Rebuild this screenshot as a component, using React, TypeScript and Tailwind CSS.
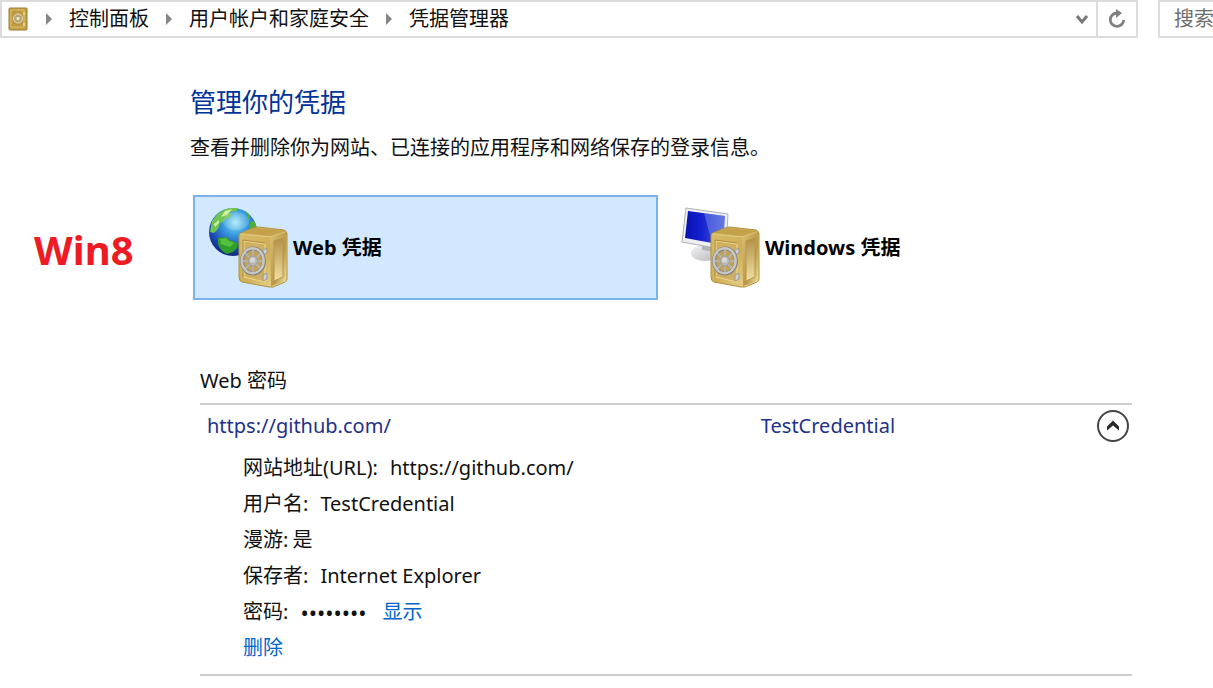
import React, { useState } from "react";

function Safe() {
  return (
    <g>
      <path d="M32 26 Q30 26 30 29 L30 70 Q30 74 33 75 L60 80 L64 80 L76 75 Q78 74 78 72 L78 27 Q78 24 75 23 L49 20 Q46 20 44 21Z" fill="url(#front)" stroke="#b0903f" strokeWidth="1" />
      <path d="M32 26 L46 21 L76 24 L61 29Z" fill="#c2a14a" />
      <path d="M31 27 L61 30 L77 25" fill="none" stroke="#e2ca7e" strokeWidth="1" />
      <path d="M61 30 L77 25 L77 74 L62 79Z" fill="url(#side)" />
      <path d="M65 34 L74 31 L74 70 L65 74Z" fill="url(#inset)" stroke="#b8964a" strokeWidth="1" />
      <path d="M35 34 L56 37 L56 75 L35 70Z" fill="#d0b060" stroke="#ecd892" strokeWidth="1" />
      <path d="M34 70 V33 L56 36" fill="none" stroke="#b09044" strokeWidth="1" />
      <path d="M54 43 l4 -2 v5 l-4 2z M54 68 l4 -2 v6 l-4 2z" fill="#cfcfcd" stroke="#9a9894" strokeWidth="1" />
      <ellipse cx="44" cy="54" rx="11" ry="12.5" fill="#c2a35a" stroke="#85827d" strokeWidth="4" />
      <path d="M44 42V66 M33 54H55 M36 46L52 62 M52 46L36 62" stroke="#b3b2af" strokeWidth="1.8" />
      <ellipse cx="43.7" cy="53.7" rx="11" ry="12.5" fill="none" stroke="#c6c6c6" strokeWidth="2.4" />
      <ellipse cx="44" cy="54" rx="4.5" ry="5" fill="#b9b9b9" stroke="#a09f9d" />
      <ellipse cx="43.5" cy="53" rx="2.5" ry="2.5" fill="#d8d8d8" />
    </g>
  );
}

function Gradients() {
  return (
    <svg width="0" height="0" className="absolute" aria-hidden="true">
      <defs>
        <linearGradient id="front" x1="0" y1="0" x2="1" y2="1"><stop offset="0" stopColor="#d9bd68" /><stop offset=".5" stopColor="#cfae56" /><stop offset="1" stopColor="#f2e29c" /></linearGradient>
        <linearGradient id="side" x1="0" y1="0" x2="1" y2="1"><stop offset="0" stopColor="#dcc173" /><stop offset=".6" stopColor="#b9974a" /><stop offset="1" stopColor="#f4e6a2" /></linearGradient>
        <linearGradient id="inset" x1="0" y1="0" x2="0" y2="1"><stop offset="0" stopColor="#b3914a" /><stop offset="1" stopColor="#f0e0a0" /></linearGradient>
        <radialGradient id="ocean" cx=".55" cy=".3" r=".7"><stop offset="0" stopColor="#a8e8fb" /><stop offset=".35" stopColor="#3a9fe0" /><stop offset=".75" stopColor="#1d4cb8" /><stop offset="1" stopColor="#12277c" /></radialGradient>
        <linearGradient id="screen" x1="0" y1="0" x2="1" y2="0"><stop offset="0" stopColor="#0912b0" /><stop offset=".4" stopColor="#1420cf" /><stop offset="1" stopColor="#4a60da" /></linearGradient>
        <linearGradient id="stand" x1="0" y1="0" x2="1" y2="1"><stop offset="0" stopColor="#f5f5f6" /><stop offset="1" stopColor="#b5b6ba" /></linearGradient>
      </defs>
    </svg>
  );
}

function WebIcon() {
  return (
    <svg width="80" height="82" viewBox="0 0 80 82" aria-hidden="true" className="shrink-0">
      <circle cx="24" cy="25" r="24" fill="url(#ocean)" />
      <path d="M3 14 Q9 4 20 1 L28 1 L28 4 L21 5 L22 9 L20 12 L17 11 L14 15 L11 16 L9 22 L5 26 L1 25Z" fill="#6fc552" />
      <path d="M16 4 L23 2 L18 8 L12 10Z M5 17 L10 13 L10 16 L6 20Z" fill="#d5eda1" />
      <path d="M35 3 L40 7 L41 13 L38 12 L39 9Z M41 15 L45 14 L48 20 L47 23 L41 22Z" fill="#4fae3a" />
      <path d="M9 31 L17 30 L21 33 L29 36 L28 41 L24 45 L18 47 Q11 44 9 37Z" fill="#2f9f2b" />
      <path d="M11 32 L17 31 L20 34 L25 36 L21 40 L12 37Z" fill="#55bf42" />
      <ellipse cx="27" cy="14" rx="13" ry="9" fill="#fff" opacity=".15" />
      <Safe />
    </svg>
  );
}

function WindowsIcon() {
  return (
    <svg width="80" height="82" viewBox="0 0 80 82" aria-hidden="true" className="shrink-0">
      <ellipse cx="24" cy="46" rx="14" ry="8" fill="url(#stand)" />
      <path d="M21 36 L35 38 L34 45 L21 43Z" fill="#b3b4b8" />
      <path d="M5 1 L47 7 L45 43 L1 35Z" fill="#eeeff1" stroke="#aeb0b6" strokeWidth="1" />
      <path d="M7 4 L44 9 L42 38 L4 31Z" fill="url(#screen)" />
      <path d="M23 6 L44 9 L42 38 L31 36Z" fill="#8ea0ed" opacity=".4" />
      <Safe />
    </svg>
  );
}

function SafeSmall() {
  return (
    <svg width="20" height="24" viewBox="0 0 20 24" aria-hidden="true">
      <rect x="1" y="1" width="18" height="22" rx="1" fill="#c6a347" stroke="#9a7a32" />
      <path d="M3 3H16V20H3Z" fill="#bd9840" stroke="#dcc06a" />
      <circle cx="10" cy="11.5" r="4.5" fill="#b5a678" stroke="#e6dcb8" />
      <circle cx="10" cy="11.5" r="1.5" fill="#f2eedd" />
      <path d="M16 5v3M16 16v3" stroke="#fff1ba" />
    </svg>
  );
}

function Crumb({ children }: { children: React.ReactNode }) {
  return (
    <li className="flex items-center">
      <svg width="8" height="14" viewBox="0 0 8 14" aria-hidden="true"><path d="M1 1L7 7L1 13Z" fill="#858585" /></svg>
      <a href="#crumb" className="mx-4">{children}</a>
    </li>
  );
}

function Card({ active, icon, label, onClick }: { active: boolean; icon: React.ReactNode; label: string; onClick: () => void }) {
  return (
    <button
      type="button"
      aria-pressed={active}
      onClick={onClick}
      className={`flex h-[105px] flex-1 items-center gap-1 border-2 pl-[14px] text-left font-bold text-black ${active ? "border-[#79b2ec] bg-[#d1e8ff]" : "border-transparent"}`}
    >
      {icon}
      <span className="whitespace-nowrap">{label}</span>
    </button>
  );
}

function Row({ name, children }: { name: string; children: React.ReactNode }) {
  return (
    <div className="flex h-9 items-center gap-3 whitespace-nowrap">
      <dt>{name}</dt>
      <dd className="flex items-center">{children}</dd>
    </div>
  );
}

export default function App() {
  const [tab, setTab] = useState("web");
  const [open, setOpen] = useState(true);
  const [shown, setShown] = useState(false);
  return (
    <div className="min-h-screen overflow-x-hidden bg-white font-['Noto_Sans','Noto_Sans_CJK_SC',sans-serif] text-[20px] leading-7 text-[#111]">
      <Gradients />
      <header className="flex h-[38px]">
        <nav aria-label="地址" className="flex flex-1 items-center border-2 border-[#dcdcdc] pl-[6px]">
          <SafeSmall />
          <ol className="ml-[17px] flex flex-1 items-center whitespace-nowrap">
            <Crumb>控制面板</Crumb>
            <Crumb>用户帐户和家庭安全</Crumb>
            <Crumb>凭据管理器</Crumb>
          </ol>
          <button type="button" aria-label="以前的位置" className="flex h-full w-7 items-center justify-center">
            <svg width="14" height="14" viewBox="0 0 14 14" aria-hidden="true"><path d="M2 4L7 10L12 4" fill="none" stroke="#777" strokeWidth="3" /></svg>
          </button>
          <button type="button" aria-label="刷新" className="flex h-full w-10 items-center justify-center border-l-2 border-[#dcdcdc]">
            <svg width="18" height="20" viewBox="0 0 18 20" aria-hidden="true">
              <path d="M9 4A6.7 6.7 0 1 0 15.7 11" fill="none" stroke="#808080" strokeWidth="2.8" />
              <path d="M8 0L14 4L8 9Z" fill="#808080" />
            </svg>
          </button>
        </nav>
        <div className="ml-5 flex w-[55px] items-center border-2 border-r-0 border-[#dcdcdc] pl-[14px]">
          <input aria-label="搜索" placeholder="搜索控制面板" className="w-full min-w-0 bg-transparent outline-none placeholder:text-[#6d6d6d]" />
        </div>
      </header>

      <div className="flex">
        <aside className="w-[190px] shrink-0 pl-[34px] pt-[184px] text-[40px] font-bold leading-[56px] text-[#ed1c24]">Win8</aside>
        <main className="min-w-0 flex-1 pr-[81px] pt-11">
          <h1 className="text-[26px] leading-10 text-[#003399]">管理你的凭据</h1>
          <p className="mt-3 whitespace-nowrap">查看并删除你为网站、已连接的应用程序和网络保存的登录信息。</p>

          <div className="ml-[3px] mt-[33px] flex gap-[7px] pr-[2px]">
            <Card active={tab === "web"} icon={<WebIcon />} label="Web 凭据" onClick={() => setTab("web")} />
            <Card active={tab === "windows"} icon={<WindowsIcon />} label="Windows 凭据" onClick={() => setTab("windows")} />
          </div>

          <section className="ml-[10px] mt-[65px]">
            <h2 className="h-10 border-b-2 border-[#cccccc] pt-[2px]">Web 密码</h2>
            <div className="border-b-2 border-[#cccccc] pb-2">
              <div className="mb-1 flex h-[41px] items-center pl-[7px] pr-[2px] text-[#1f3189]">
                <span className="w-3/5">https://github.com/</span>
                <span className="flex-1">TestCredential</span>
                <button type="button" aria-label="折叠" aria-expanded={open} onClick={() => setOpen(!open)}>
                  <svg width="34" height="34" viewBox="0 0 34 34" aria-hidden="true" className="block">
                    <circle cx="17" cy="17" r="15" fill="none" stroke="#444" strokeWidth="2" />
                    <path d="M11 17.5L17 11.5L23 17.5V21.5L17 16.5L11 21.5Z" fill="#2a2a2a" />
                  </svg>
                </button>
              </div>
              {open && (
                <div className="pl-[43px]">
                  <dl>
                    <Row name="网站地址(URL):">https://github.com/</Row>
                    <Row name="用户名:">TestCredential</Row>
                    <div className="flex h-9 items-center gap-1">
                      <dt>漫游:</dt>
                      <dd>是</dd>
                    </div>
                    <Row name="保存者:">Internet Explorer</Row>
                    <Row name="密码:">
                      <span className="text-[22px]">••••••••</span>
                      <button type="button" onClick={() => setShown(!shown)} className="ml-4 text-[#0066cc]">显示</button>
                    </Row>
                  </dl>
                  <a href="#delete" className="flex h-9 items-center text-[#0066cc]">删除</a>
                </div>
              )}
            </div>
          </section>
        </main>
      </div>
    </div>
  );
}
